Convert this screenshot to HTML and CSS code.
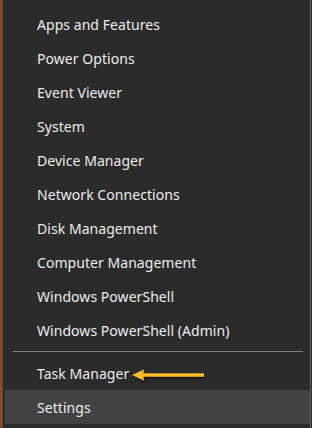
FILE: index.html
```html
<!DOCTYPE html>
<html lang="en">
<head>
  <meta charset="UTF-8">
  <title>Quick Link Menu</title>
  <link rel="stylesheet" href="styles.css">
</head>
<body>
  <div class="desk">
    <div class="menu">
      <ul class="menu-list">
        <li class="menu-item">Apps and Features</li>
        <li class="menu-item">Power Options</li>
        <li class="menu-item">Event Viewer</li>
        <li class="menu-item">System</li>
        <li class="menu-item">Device Manager</li>
        <li class="menu-item">Network Connections</li>
        <li class="menu-item">Disk Management</li>
        <li class="menu-item">Computer Management</li>
        <li class="menu-item">Windows PowerShell</li>
        <li class="menu-item">Windows PowerShell (Admin)</li>
        <li class="menu-sep"></li>
        <li class="menu-item">
          Task Manager
          <svg class="arrow" width="80" height="20" viewBox="0 0 80 20">
            <defs>
              <filter id="sh" x="-10%" y="-50%" width="130%" height="200%">
                <feDropShadow dx="1" dy="1.5" stdDeviation="1.2" flood-color="#000" flood-opacity="0.7"/>
              </filter>
            </defs>
            <g filter="url(#sh)">
              <rect x="10" y="8.3" width="64" height="3.4" fill="#f7bd2a"/>
              <path d="M2 10 L14 4.5 L13 10 L14 15.5 Z" fill="#f7bd2a"/>
            </g>
          </svg>
        </li>
        <li class="menu-item hover">Settings</li>
      </ul>
    </div>
  </div>
</body>
</html>
```
FILE: styles.css
```css
html, body {
  margin: 0;
  padding: 0;
  height: 100%;
}
body {
  font-family: "Noto Sans", "Open Sans", sans-serif;
  background: #2b2b2b;
  overflow: hidden;
}
.desk {
  height: 428px;
  width: 312px;
  border-left: 2px solid #8a4a22;
  box-sizing: border-box;
}
.menu {
  height: 100%;
  background: #2b2b2b;
  border-left: 1px solid #4e4e4e;
  border-right: 1px solid #5e5e5e;
  box-sizing: border-box;
  margin-right: 1px;
}
.menu-list {
  list-style: none;
  margin: 0;
  padding: 7px 0 0 2px;
}
.menu-item {
  position: relative;
  height: 34px;
  line-height: 36px;
  padding-left: 32px;
  color: #ececec;
  font-size: 14px;
  letter-spacing: 0.05px;
}
.menu-item.hover {
  background: #424242;
}
.menu-sep {
  height: 9px;
  display: flex;
  align-items: center;
  padding: 0 7px 0 8px;
}
.menu-sep::after {
  content: '';
  flex: 1;
  height: 1px;
  background: #7e7e7e;
}
.arrow {
  position: absolute;
  left: 125px;
  top: 9px;
}
```
